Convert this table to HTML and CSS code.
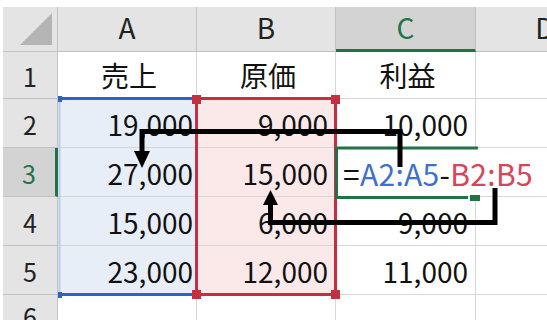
FILE: index.html
```html
<!DOCTYPE html>
<html lang="ja">
<head>
<meta charset="utf-8">
<title>売上と原価</title>
<link rel="stylesheet" href="styles.css">
</head>
<body>
<div class="sheet">
  <div class="corner"><svg width="55" height="45" viewBox="0 0 55 45"><polygon points="17,38 49,38 49,6" fill="#b5b5b5"/></svg></div>
  <div class="colhead">A</div>
  <div class="colhead">B</div>
  <div class="colhead sel">C</div>
  <div class="colhead">D</div>

  <div class="rowhead">1</div>
  <div class="cell title">売上</div>
  <div class="cell title">原価</div>
  <div class="cell title">利益</div>
  <div class="cell"></div>

  <div class="rowhead">2</div>
  <div class="cell num col-a fill-a">19,000</div>
  <div class="cell num fill-b">9,000</div>
  <div class="cell num">10,000</div>
  <div class="cell"></div>

  <div class="rowhead sel">3</div>
  <div class="cell num col-a fill-a">27,000</div>
  <div class="cell num fill-b">15,000</div>
  <div class="cell editing">=<span class="ref-a">A2:A5</span>-<span class="ref-b">B2:B5</span></div>
  <div class="cell"></div>

  <div class="rowhead">4</div>
  <div class="cell num col-a fill-a">15,000</div>
  <div class="cell num fill-b">6,000</div>
  <div class="cell num">9,000</div>
  <div class="cell"></div>

  <div class="rowhead">5</div>
  <div class="cell num col-a fill-a">23,000</div>
  <div class="cell num fill-b">12,000</div>
  <div class="cell num">11,000</div>
  <div class="cell"></div>

  <div class="rowhead">6</div>
  <div class="cell"></div>
  <div class="cell"></div>
  <div class="cell"></div>
  <div class="cell"></div>
</div>

<svg class="marks" width="547" height="320" viewBox="0 0 547 320">
  <!-- range A2:A5 -->
  <line x1="59.5" y1="99" x2="59.5" y2="295" stroke="#b9cbec" stroke-width="2"/>
  <line x1="60" y1="98.5" x2="195" y2="98.5" stroke="#2f62c4" stroke-width="3"/>
  <line x1="60" y1="294.5" x2="195" y2="294.5" stroke="#2f62c4" stroke-width="3"/>
  <rect x="58" y="96" width="4" height="6" fill="#2f62c4"/>
  <rect x="58" y="292" width="4" height="6" fill="#2f62c4"/>
  <!-- range B2:B5 -->
  <g stroke="#c62f3f" stroke-width="3">
    <line x1="197" y1="98.5" x2="336" y2="98.5"/>
    <line x1="197" y1="294.5" x2="336" y2="294.5"/>
    <line x1="196.5" y1="98" x2="196.5" y2="295"/>
    <line x1="335.5" y1="98" x2="335.5" y2="295"/>
  </g>
  <g fill="#c62f3f">
    <rect x="192" y="95" width="9" height="9"/>
    <rect x="331" y="95" width="9" height="9"/>
    <rect x="192" y="290" width="9" height="9"/>
    <rect x="331" y="290" width="9" height="9"/>
  </g>
  <!-- active cell C3 -->
  <path d="M478,148 H336.5 V197.5 H468" fill="none" stroke="#217346" stroke-width="3"/>
  <rect x="470" y="195" width="10" height="6" fill="#217346"/>
  <!-- reference arrows -->
  <g fill="none" stroke="#000" stroke-width="5" stroke-linejoin="miter">
    <path d="M400,167 V131.5 H142 V152"/>
    <path d="M495,188 V222.5 H270.5 V204"/>
  </g>
  <polygon points="134,151 150,151 142,168" fill="#000"/>
  <polygon points="263,205 278,205 270.5,190" fill="#000"/>
</svg>
</body>
</html>
```

FILE: styles.css
```css
html, body {
  margin: 0;
  padding: 0;
  width: 547px;
  height: 320px;
  overflow: hidden;
  background: #ffffff;
}

body {
  position: relative;
  font-family: "Noto Sans CJK JP", "Noto Sans", sans-serif;
  color: #111111;
}

.sheet {
  display: grid;
  grid-template-columns: 55px 139px 139px 140px 139px;
  grid-template-rows: 45px 47px 49px 49px 49px 49px 40px;
  margin: 7px 0 0 3px;
}

.sheet > div {
  box-sizing: border-box;
  min-width: 0;
  overflow: hidden;
}

/* headers */
.corner,
.colhead,
.rowhead {
  background: #e4e4e4;
  border-right: 1px solid #c2c2c2;
  border-bottom: 1px solid #c2c2c2;
}

.colhead {
  display: flex;
  align-items: center;
  justify-content: center;
  font-size: 28px;
  line-height: 1;
  padding-bottom: 4px;
  color: #222222;
}

.colhead.sel {
  background: #d3d3d3;
  color: #217346;
  border-bottom: 3px solid #217346;
  padding-bottom: 2px;
}

.rowhead {
  display: flex;
  align-items: center;
  justify-content: center;
  font-size: 25px;
  line-height: 1;
  padding-top: 3px;
  color: #222222;
}

.rowhead.sel {
  background: #d3d3d3;
  color: #217346;
  border-right: 3px solid #217346;
}

/* cells */
.cell {
  border-right: 1px solid #d6d6d6;
  border-bottom: 1px solid #d6d6d6;
  font-size: 28px;
  line-height: 1;
  white-space: nowrap;
}

.title {
  display: flex;
  align-items: center;
  justify-content: center;
  padding-left: 4px;
}

.num {
  display: flex;
  align-items: center;
  justify-content: flex-end;
  padding-right: 7px;
  padding-top: 2px;
}

.num.col-a {
  padding-right: 3px;
}

.fill-a {
  background: #e8eef8;
}

.fill-b {
  background: #fbe9e9;
}

/* cell being edited: the formula runs on into column D */
.cell.editing {
  position: relative;
  z-index: 1;
  overflow: visible;
  border-right: none;
  display: flex;
  align-items: center;
  padding-left: 7px;
  padding-top: 2px;
  font-size: 30px;
  letter-spacing: 0.3px;
}

.ref-a {
  color: #3e70d2;
}

.ref-b {
  color: #d84557;
}

.marks {
  position: absolute;
  top: 0;
  left: 0;
  z-index: 2;
  pointer-events: none;
}
```
